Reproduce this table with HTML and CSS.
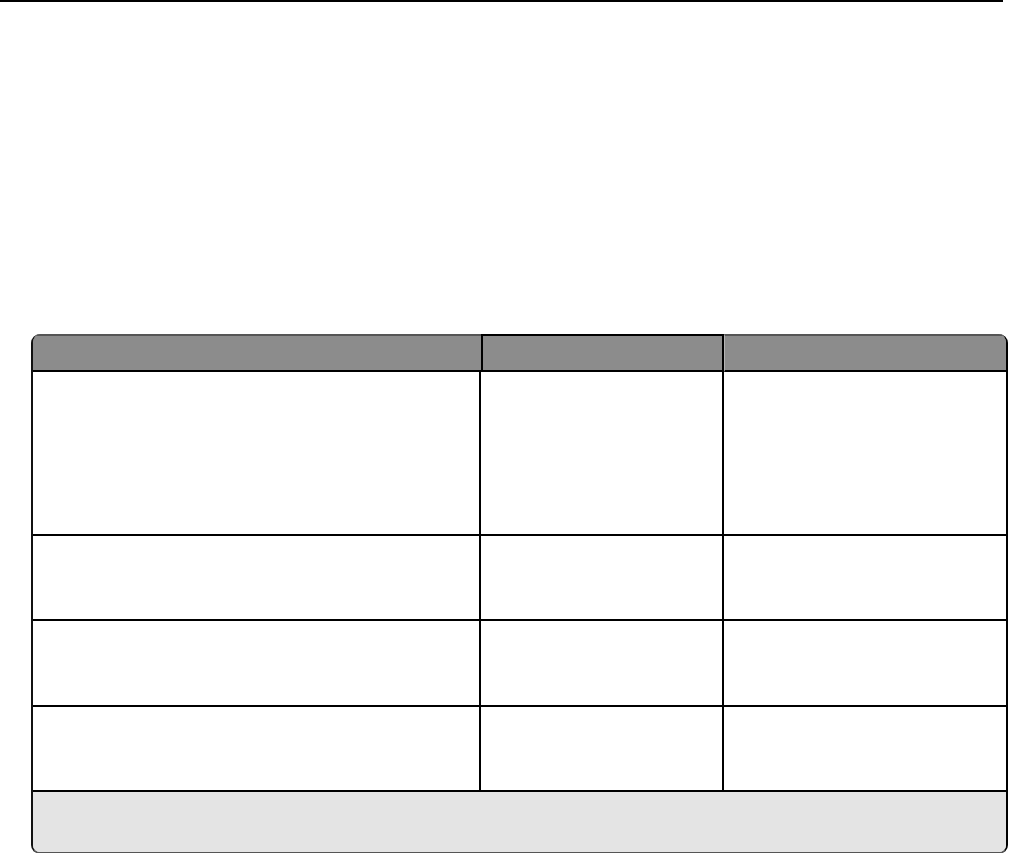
FILE: index.html
```html
<!DOCTYPE html>
<html>
<head>
<meta charset="utf-8">
<link rel="stylesheet" href="styles.css">
</head>
<body>
<div class="rule"></div>
<div class="table">
  <div class="cell head c1"></div>
  <div class="cell head c2"></div>
  <div class="cell head c3"></div>

  <div class="cell r1 c1"></div>
  <div class="cell r1 c2"></div>
  <div class="cell r1 c3"></div>

  <div class="cell r2 c1"></div>
  <div class="cell r2 c2"></div>
  <div class="cell r2 c3"></div>

  <div class="cell r3 c1"></div>
  <div class="cell r3 c2"></div>
  <div class="cell r3 c3"></div>

  <div class="cell r4 c1"></div>
  <div class="cell r4 c2"></div>
  <div class="cell r4 c3"></div>

  <div class="foot"></div>
</div>
</body>
</html>
```
FILE: styles.css
```css
html, body {
  margin: 0;
  padding: 0;
  background: #fff;
  font-family: "Liberation Sans", Arial, sans-serif;
}
.rule {
  width: 1003px;
  height: 2px;
  background: #000;
}
.table {
  margin: 332px 0 0 31px;
  width: 977px;
  box-sizing: border-box;
  display: grid;
  grid-template-columns: 448px 243px 1fr;
  grid-template-rows: 38px 164px 85px 86px 85px 60px;
  border-left: 2px solid #111;
  border-right: 2px solid #000;
  border-bottom: 2px solid #555;
  border-radius: 9px;
  overflow: hidden;
  background: #fff;
  box-shadow: inset 0 2px 0 #555;
}
.cell {
  box-sizing: border-box;
  border-bottom: 2px solid #000;
}
.c1, .c2 {
  border-right: 2px solid #000;
}
.head {
  background: #8c8c8c;
  border-top: 2px solid #555;
}
.head.c1 {
  border-right: none;
}
.head.c2 {
  border-left: 2px solid #000;
  border-right: 2px solid #000;
  border-top-color: #000;
}
.head.c3 {
  border-left: 1px solid #b5b5b5;
}
.foot {
  grid-column: 1 / -1;
  background: #e4e4e4;
}
```
